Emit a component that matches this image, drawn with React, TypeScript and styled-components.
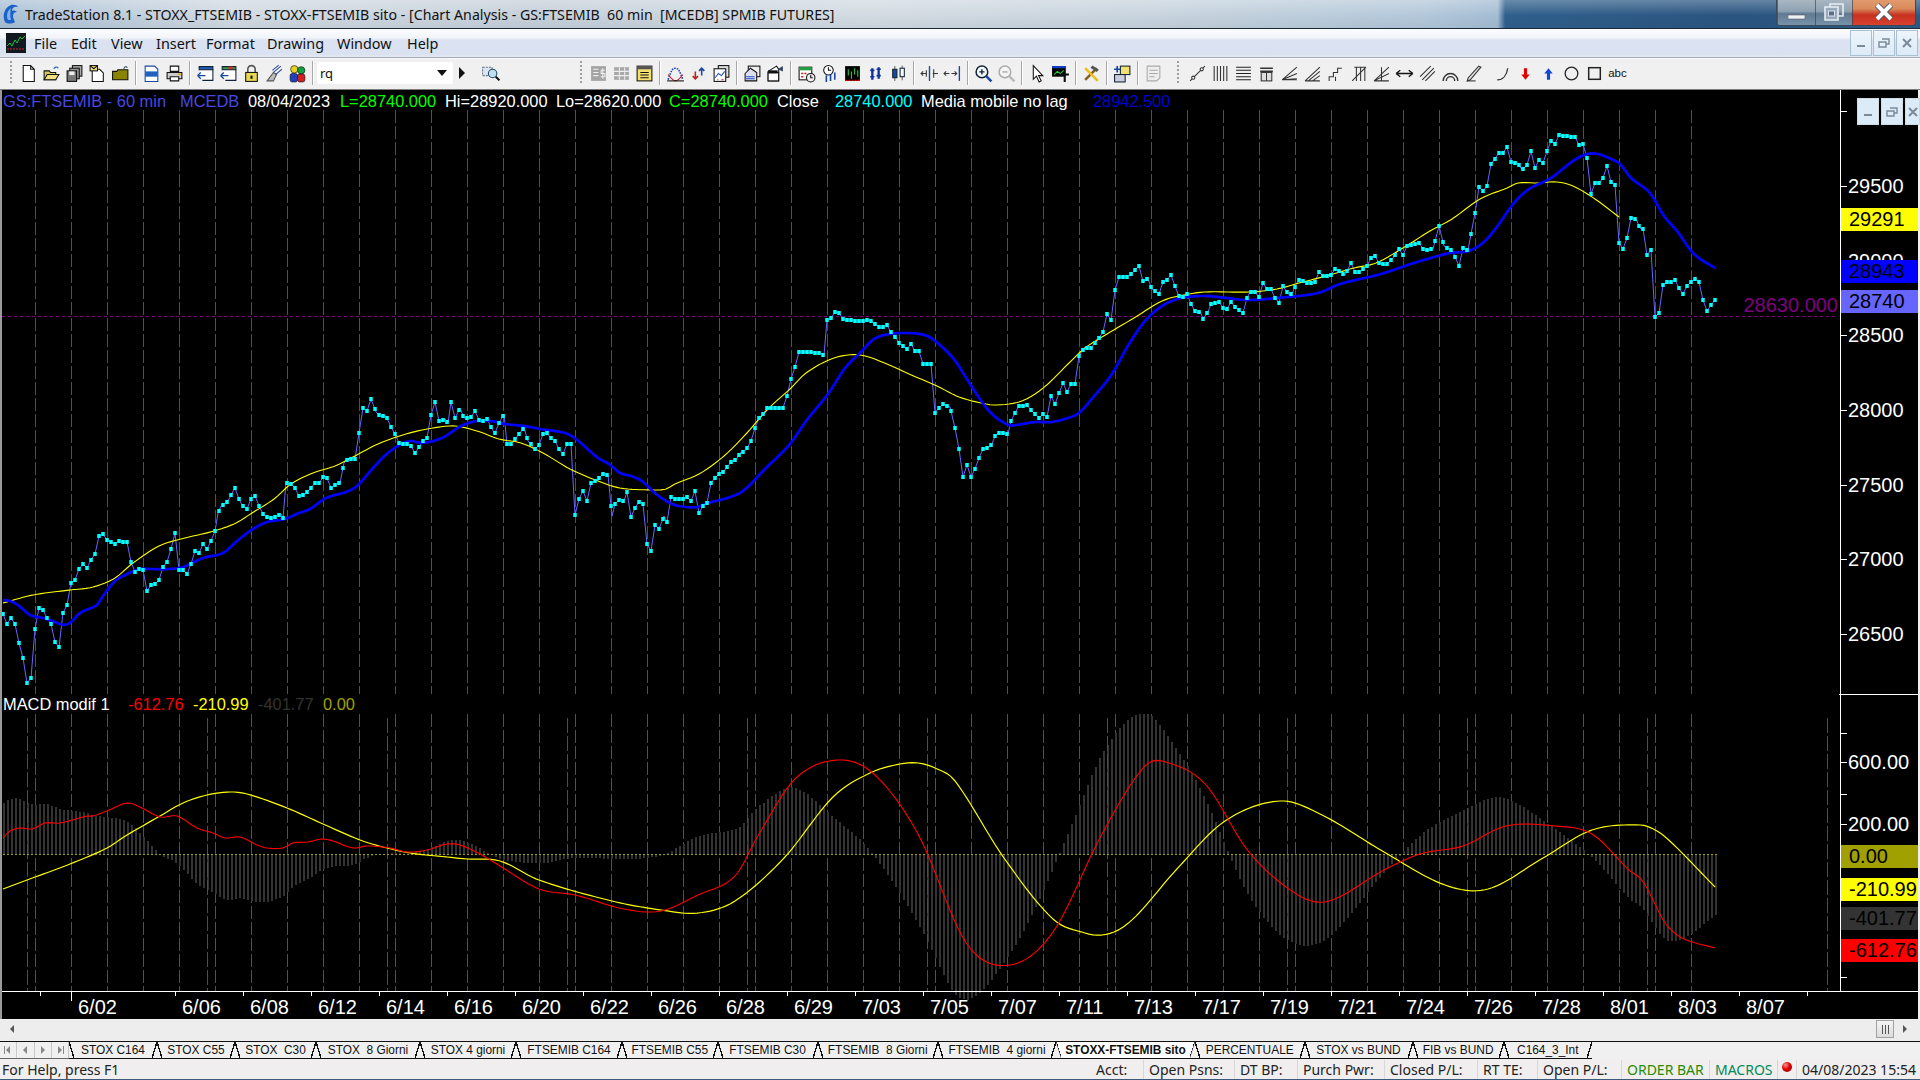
import React from "react";
import styled, { createGlobalStyle } from "styled-components";

const GlobalStyle = createGlobalStyle`
  html, body {
    margin: 0;
    padding: 0;
    background: #f0f0f0;
    overflow: hidden;
  }
  #root {
    height: 1080px;
  }
`;

const uiFont = `"Noto Sans", "Open Sans", sans-serif`;
const chartFont = `"Liberation Sans", Arial, sans-serif`;

const Root = styled.div`
  width: 1920px;
  height: 1080px;
  display: flex;
  flex-direction: column;
  overflow: hidden;
  font-family: ${uiFont};
`;

// Title bar
const TitleBarBox = styled.div`
  height: 28px;
  flex: none;
  display: flex;
  align-items: center;
  border-bottom: 1px solid #1c2a38;
  background:
    linear-gradient(180deg, rgba(255, 255, 255, 0.28), rgba(255, 255, 255, 0) 55%, rgba(30, 50, 70, 0.06)),
    linear-gradient(
      90deg,
      #a9c0d6 0,
      #d2dae2 12%,
      #c6d0da 28%,
      #d3dbe2 45%,
      #c8d4de 60%,
      #b4c8da 74%,
      #a4bdd3 78%,
      #2f5f8c 78.4%,
      #2a5580 90%,
      #2b5a86 100%
    );
`;
const TitleLogo = styled.svg`
  width: 17px;
  height: 22px;
  margin-left: 2px;
  flex: none;
`;
const TitleText = styled.div`
  margin-left: 6px;
  font-size: 14.2px;
  color: #111;
  white-space: pre;
`;
const WindowButtons = styled.div`
  margin-left: auto;
  margin-right: 4px;
  height: 25px;
  margin-top: -3px;
  display: flex;
  border: 1px solid #3a4a5a;
  border-top: none;
  border-radius: 0 0 4px 4px;
  overflow: hidden;
`;
const WinBtn = styled.div<{ $w: number; $close?: boolean }>`
  width: ${(p) => p.$w}px;
  display: flex;
  align-items: center;
  justify-content: center;
  border-left: 1px solid rgba(40, 60, 80, 0.6);
  background: ${(p) =>
    p.$close
      ? "linear-gradient(180deg, #e09a6c 0, #d98a5c 35%, #c83020 60%, #d84030 100%)"
      : "linear-gradient(180deg, #a9b6c2 0, #8fa2b2 45%, #5f7a92 55%, #7892a8 100%)"};
`;

// Menu bar
const MenuBarBox = styled.div`
  height: 28px;
  flex: none;
  display: flex;
  align-items: center;
  background: linear-gradient(180deg, #fbfcfe 0, #f2f5fa 30%, #dbe2f1 40%, #dae1f0 90%, #e6eaf4 100%);
  border-bottom: 1px solid #a8a8b0;
`;
const MenuLogo = styled.svg`
  width: 20px;
  height: 20px;
  margin-left: 6px;
  margin-right: 8px;
  flex: none;
`;
const MenuItem = styled.span<{ $w: number }>`
  width: ${(p) => p.$w}px;
  font-size: 14.4px;
  color: #111;
`;
const MdiButtons = styled.div`
  margin-left: auto;
  margin-right: 2px;
  display: flex;
  gap: 1px;
`;
const MdiBtn = styled.div<{ $w?: number }>`
  width: ${(p) => p.$w ?? 22}px;
  height: 26px;
  box-sizing: border-box;
  border: 1px solid #a8c0d0;
  background: linear-gradient(180deg, #eef5fb, #dcebf8);
  display: flex;
  align-items: center;
  justify-content: center;
`;

// Toolbar
const ToolbarBox = styled.div`
  height: 32px;
  flex: none;
  box-sizing: border-box;
  display: flex;
  align-items: center;
  padding-left: 10px;
  padding-bottom: 2px;
  background: #f0f0f0;
  border-top: 1px solid #fafafa;
  border-bottom: 1px solid #7c7c7c;
`;
const Grip = styled.div<{ $ml?: number }>`
  width: 2px;
  height: 24px;
  margin-left: ${(p) => p.$ml ?? 0}px;
  margin-right: 5px;
  flex: none;
  background: repeating-linear-gradient(180deg, #a0a0a0 0 2px, transparent 2px 4px);
`;
const ToolSlot = styled.div<{ $w?: number }>`
  width: ${(p) => p.$w ?? 23}px;
  height: 22px;
  flex: none;
  display: flex;
  align-items: center;
  justify-content: center;
`;
const ToolSep = styled.div`
  width: 8px;
  height: 24px;
  flex: none;
  background: linear-gradient(90deg, transparent 3px, #a8a8a8 3px, #a8a8a8 4px, #fff 4px, #fff 5px, transparent 5px);
`;
const ToolGap = styled.div<{ $w: number }>`
  width: ${(p) => p.$w}px;
  flex: none;
`;
const Combo = styled.div`
  width: 136px;
  height: 22px;
  flex: none;
  box-sizing: border-box;
  background: #fff;
  display: flex;
  align-items: center;
  justify-content: space-between;
  padding: 0 5px 0 3px;
  font-size: 13px;
  color: #111;
  border-radius: 2px;
`;
const AbcText = styled.span`
  font-size: 11.5px;
  color: #111;
  font-family: ${chartFont};
`;

// Chart
const ChartPane = styled.div`
  position: relative;
  height: 929px;
  flex: none;
  background: #000;
  border-left: 2px solid #9a9a9a;
  border-right: 2px solid #f0f0f0;
`;
const ChartSvg = styled.svg`
  display: block;
  width: 1916px;
  height: 929px;
`;
const Legend = styled.div<{ $top: number }>`
  position: absolute;
  left: 1px;
  top: ${(p) => p.$top}px;
  height: 22px;
  display: flex;
  align-items: center;
  font-family: ${chartFont};
  font-size: 16.4px;
  white-space: pre;
`;
const LegendItem = styled.span<{ $w?: number; $c: string }>`
  color: ${(p) => p.$c};
  ${(p) => (p.$w ? `width: ${p.$w}px;` : "")}
`;
const PaneButtons = styled.div`
  position: absolute;
  top: 8px;
  left: 1855px;
  display: flex;
  gap: 2px;
`;
const PaneBtn = styled(MdiBtn)`
  height: 27px;
  border-color: #d0d8e0;
  background: #dcebf8;
`;

// Scroll row
const ScrollRow = styled.div`
  height: 22px;
  flex: none;
  box-sizing: border-box;
  display: flex;
  align-items: center;
  background: #ededed;
  padding: 0 10px 2px 7px;
`;
const ScrollThumb = styled.div`
  margin-left: auto;
  margin-right: 6px;
  width: 18px;
  height: 18px;
  box-sizing: border-box;
  border: 1px solid #a0a0a0;
  background: linear-gradient(180deg, #f4f4f4, #dcdcdc);
  display: flex;
  align-items: center;
  justify-content: center;
  gap: 2px;
`;
const ThumbLine = styled.i`
  width: 1px;
  height: 9px;
  background: #555;
`;

// Sheet tabs
const TabsRow = styled.div`
  height: 18px;
  flex: none;
  display: flex;
  background: #f0f0f0;
  border-top: 1px solid #111;
  box-sizing: border-box;
`;
const TabNav = styled.div`
  width: 69px;
  flex: none;
  display: flex;
  border-bottom: 1px solid #666;
  box-sizing: border-box;
`;
const TabNavBtn = styled.div`
  flex: 1;
  display: flex;
  align-items: center;
  justify-content: center;
  border-right: 1px solid #c8c8c8;
`;
const TabStrip = styled.div`
  display: flex;
  border-bottom: 1px solid #111;
  box-sizing: border-box;
`;
const slash = (dir: string) =>
  `linear-gradient(to top ${dir}, transparent calc(50% - 0.7px), #111 calc(50% - 0.7px), #111 calc(50% + 0.7px), transparent calc(50% + 0.7px))`;
const Tab = styled.div<{ $w: number; $active?: boolean }>`
  width: ${(p) => p.$w}px;
  flex: none;
  display: flex;
  align-items: center;
  justify-content: center;
  font-family: ${chartFont};
  font-size: 11.9px;
  font-weight: ${(p) => (p.$active ? 700 : 400)};
  color: #111;
  white-space: pre;
  background-color: ${(p) => (p.$active ? "#fff" : "transparent")};
  background-image: ${slash("right")}, ${slash("left")};
  background-size: 5px 100%;
  background-position: left top, right top;
  background-repeat: no-repeat;
  ${(p) => (p.$active ? "clip-path: polygon(0 0, 100% 0, calc(100% - 5px) 100%, 5px 100%);" : "")}
`;

// Status bar
const StatusBarBox = styled.div`
  height: 20px;
  flex: none;
  box-sizing: border-box;
  padding-top: 1px;
  display: flex;
  align-items: center;
  background: #f0eeee;
  font-size: 14px;
  color: #222;
`;
const StatusHelp = styled.div`
  width: 1091px;
  padding-left: 2px;
  box-sizing: border-box;
`;
const StatusCell = styled.div<{ $w: number; $c?: string; $plain?: boolean }>`
  width: ${(p) => p.$w}px;
  height: 100%;
  flex: none;
  box-sizing: border-box;
  padding-left: 5px;
  white-space: nowrap;
  display: flex;
  align-items: center;
  color: ${(p) => p.$c ?? "#222"};
  ${(p) => (p.$plain ? "" : "border-left: 1px solid #d8d6d6;")}
`;
const RedDot = styled.div`
  width: 10px;
  height: 10px;
  margin-left: -1px;
  margin-top: -5px;
  border-radius: 50%;
  background: radial-gradient(circle at 35% 30%, #ff9090, #e00000 45%, #800000);
`;
const BottomEdge = styled.div`
  height: 2px;
  flex: none;
  background: #3c5a7c;
`;

// Series, as x y pairs in page pixels
type Pts = [number, number][];
const parse = (s: string) => {
  const n = s.trim().split(/\s+/).map(Number);
  const out: Pts = [];
  for (let i = 0; i < n.length; i += 2) out.push([n[i], n[i + 1]]);
  return out;
};

const price = parse(`3 613 7 623 11 617 15 623 19 642 23 657 27 682 31 677 35 628 39 607 43 609 47 617 51 623 55 641 59 646 63 612 67 604 71 582 75 579 79 568 83 563 87 567 91 559 95 553 99 535 103 533 107 539 111 541 115 543 119 540 123 541 127 541 131 561 135 571 139 568 143 569 147 590 151 584 155 583 159 579 163 566 167 561 171 548 175 532 179 569 183 569 187 573 191 563 195 550 199 552 203 543 207 548 211 540 215 530 218 512 221 505 228 500 235 487 239 498 242 504 247 508 251 498 255 495 260 507 263 513 269 517 274 516 281 513 283 517 286 482 291 483 295 487 299 495 305 493 311 487 315 482 319 482 324 475 327 477 331 487 336 483 340 482 344 462 348 458 355 458 359 432 363 407 367 410 371 398 376 411 380 415 386 415 391 426 396 435 399 442 407 443 411 445 415 452 420 445 423 440 427 437 431 414 435 401 439 420 445 418 448 422 451 401 455 417 460 407 464 417 471 416 475 410 480 421 487 418 492 428 495 432 499 422 504 413 507 443 511 443 516 437 519 433 524 427 528 440 535 448 539 444 543 433 547 432 551 437 555 440 559 448 563 453 567 443 571 443 575 514 579 498 583 490 587 500 591 482 595 480 599 477 603 473 608 474 612 515 615 503 620 498 624 500 627 491 631 516 635 507 640 499 643 503 647 543 651 550 655 524 659 528 664 515 667 521 671 496 675 498 683 498 687 496 691 500 695 490 699 512 703 505 707 502 711 482 715 477 720 472 723 471 728 465 732 460 736 459 740 452 746 449 751 440 755 427 759 417 763 413 767 407 776 407 783 407 787 395 791 378 795 366 799 351 804 351 820 352 824 354 827 319 831 317 835 311 839 312 843 318 851 319 858 320 863 320 870 319 875 323 881 327 887 324 892 333 896 337 900 343 907 348 911 343 915 350 919 350 923 363 931 363 935 412 939 407 943 403 950 406 955 427 959 448 963 476 967 464 971 476 975 468 979 457 983 448 988 447 992 443 995 435 1000 431 1004 432 1008 433 1011 420 1015 412 1019 405 1027 404 1031 409 1035 413 1039 417 1043 413 1047 416 1051 395 1055 403 1058 395 1063 382 1067 391 1071 383 1075 383 1079 355 1084 347 1091 347 1099 337 1103 331 1107 313 1111 319 1115 289 1119 276 1127 276 1132 272 1139 265 1143 280 1148 278 1152 288 1159 293 1163 281 1167 279 1171 274 1175 285 1180 298 1187 293 1191 303 1196 312 1200 310 1203 318 1208 311 1211 303 1219 301 1224 308 1227 308 1231 301 1236 307 1243 312 1247 297 1250 291 1255 291 1259 296 1263 282 1267 288 1271 288 1275 297 1279 302 1283 285 1288 293 1292 293 1296 283 1300 278 1304 281 1309 282 1315 281 1319 271 1323 275 1331 274 1335 268 1340 271 1345 274 1351 262 1356 273 1361 270 1367 265 1371 257 1375 255 1379 262 1386 264 1393 257 1399 248 1403 254 1407 245 1419 242 1424 249 1433 248 1439 225 1444 245 1448 247 1453 251 1459 265 1463 247 1468 249 1471 233 1475 212 1479 186 1483 190 1487 185 1491 163 1494 159 1499 152 1503 152 1507 146 1511 161 1518 162 1522 169 1527 164 1531 150 1535 167 1539 159 1543 162 1547 150 1551 140 1555 143 1559 134 1575 136 1579 144 1583 143 1587 157 1591 193 1595 182 1599 182 1603 177 1607 165 1611 181 1615 184 1619 242 1623 248 1627 237 1631 217 1636 218 1640 227 1643 228 1647 254 1651 249 1655 316 1659 312 1663 284 1667 281 1671 281 1675 279 1679 287 1683 293 1687 285 1691 281 1695 278 1699 281 1703 299 1707 310 1711 304 1715 299`);

const blueMa = parse(`3 599 10 600 18 604 30 614 43 617 55 621 63 624 70 622 80 612 97 604 103 595 115 580 125 574 140 568 150 568 170 568 183 566 203 557 223 552 237 540 253 528 267 521 285 518 299 512 310 508 326 497 346 491 357 485 373 467 389 451 409 440 422 442 442 437 461 425 477 420 491 420 505 423 524 425 540 428 565 432 576 438 598 457 609 463 620 472 631 475 642 480 656 493 672 503 686 506 697 506 708 502 727 497 743 490 765 468 790 443 806 420 828 393 845 367 860 352 874 338 890 333 907 332 920 333 931 337 953 357 970 383 989 410 1008 424 1016 424 1035 421 1052 421 1071 416 1079 412 1096 393 1112 373 1129 343 1145 320 1162 305 1181 297 1205 295 1227 297 1247 299 1277 297 1318 292 1340 283 1381 273 1414 262 1450 252 1469 250 1485 240 1499 223 1513 203 1529 188 1551 177 1573 160 1587 153 1598 153 1609 157 1620 163 1631 177 1650 192 1664 215 1677 230 1694 253 1715 267`);

const yellowMa = parse(`3 602 33 594 70 589 93 586 115 577 133 562 159 545 181 538 214 530 236 522 252 512 274 498 291 483 313 472 335 465 351 457 378 443 406 433 433 427 455 425 477 430 499 438 521 442 543 452 570 468 598 480 620 487 653 489 666 488 675 483 699 473 724 455 746 433 768 408 790 388 806 372 834 357 860 354 887 363 909 373 937 385 959 396 986 403 997 404 1019 401 1035 393 1049 382 1068 363 1085 347 1107 333 1134 317 1162 300 1184 294 1205 291 1249 291 1277 288 1299 282 1326 275 1354 267 1376 262 1403 247 1430 230 1452 218 1480 198 1507 187 1518 182 1537 182 1557 181 1573 185 1595 198 1619 216`);

const macdPts = parse(`3 837 10 830 20 827 32 828 45 822 60 822 87 815 93 815 107 810 127 802 140 806 160 816 177 815 197 827 213 832 225 837 240 836 257 844 267 847 283 847 293 842 308 841 322 838 333 840 353 847 367 845 390 847 407 851 427 849 447 843 460 844 480 853 500 865 539 888 575 894 624 908 661 910 698 894 735 875 759 833 796 777 839 759 875 774 918 833 967 943 1010 964 1053 931 1102 833 1145 765 1169 762 1206 784 1249 851 1298 894 1329 900 1384 869 1420 853 1463 845 1506 825 1555 825 1592 833 1629 869 1640 877 1647 887 1657 907 1665 922 1682 937 1715 947`);

const signalPts = parse(`3 888 27 879 70 863 107 847 127 834 160 815 183 802 207 794 230 791 247 793 287 807 323 823 360 839 383 846 410 852 447 856 467 858 500 860 539 879 612 900 661 909 698 912 735 900 784 857 833 796 870 772 900 763 918 762 935 767 955 780 1004 857 1053 918 1085 932 1102 934 1120 928 1139 912 1176 869 1225 820 1280 800 1322 814 1384 851 1445 884 1488 888 1543 857 1592 829 1640 824 1657 830 1673 843 1715 886`);

const interp = (pts: Pts, x: number) => {
  for (let i = 1; i < pts.length; i++) {
    if (x <= pts[i][0]) {
      const [x0, y0] = pts[i - 1];
      const [x1, y1] = pts[i];
      return y0 + ((y1 - y0) * (x - x0)) / (x1 - x0);
    }
  }
  return pts[pts.length - 1][1];
};

// Hermite resampling so the averages read as curves, not as straight pieces
const smooth = (pts: Pts, step = 4) => {
  const slope = (i: number) => {
    const a = pts[Math.max(i - 1, 0)];
    const b = pts[Math.min(i + 1, pts.length - 1)];
    return (b[1] - a[1]) / (b[0] - a[0]);
  };
  const out: Pts = [];
  for (let i = 0; i < pts.length - 1; i++) {
    const [x0, y0] = pts[i];
    const [x1, y1] = pts[i + 1];
    const h = x1 - x0;
    const m0 = slope(i);
    const m1 = slope(i + 1);
    for (let x = x0; x < x1; x += step) {
      const t = (x - x0) / h;
      const t2 = t * t;
      const t3 = t2 * t;
      const y = (2 * t3 - 3 * t2 + 1) * y0 + (t3 - 2 * t2 + t) * h * m0 + (-2 * t3 + 3 * t2) * y1 + (t3 - t2) * h * m1;
      out.push([x, +y.toFixed(2)]);
    }
  }
  out.push(pts[pts.length - 1]);
  return out;
};

const blueCurve = smooth(blueMa);
const yellowCurve = smooth(yellowMa);
const macd = smooth(macdPts);
const signal = smooth(signalPts);

const toPoints = (pts: Pts) => pts.map((p) => p.join(",")).join(" ");

const bars: number[] = [];
for (let x = 3; x <= 1715; x += 4) bars.push(x);
const gridX: number[] = [];
for (let x = 35; x <= 1691; x += 36) gridX.push(x);
const sessionX: number[] = [];
for (let x = 27; x <= 1827; x += 180) sessionX.push(x);

const priceTicks = [110, 185, 260, 334, 409, 484, 558, 633];
const priceLabels: [string, number][] = [
  ["29500", 185],
  ["29000", 260],
  ["28500", 334],
  ["28000", 409],
  ["27500", 484],
  ["27000", 558],
  ["26500", 633],
];
const macdTicks = [732, 761, 793, 823, 976];
const macdLabels: [string, number][] = [
  ["600.00", 761],
  ["200.00", 823],
];
const tags: [string, number, string, string][] = [
  ["29291", 207, "#ffff00", "#000"],
  ["28943", 259, "#0000ff", "#000"],
  ["28740", 289, "#6666ff", "#000"],
  ["0.00", 844, "#a0a000", "#000"],
  ["-210.99", 877, "#ffff00", "#000"],
  ["-401.77", 906, "#333333", "#000"],
  ["-612.76", 938, "#ff0000", "#000"],
];
const dates = ["6/06", "6/08", "6/12", "6/14", "6/16", "6/20", "6/22", "6/26", "6/28", "6/29", "7/03", "7/05", "7/07", "7/11", "7/13", "7/17", "7/19", "7/21", "7/24", "7/26", "7/28", "8/01", "8/03", "8/07"];

function Chart() {
  return (
    <ChartSvg viewBox="2 89 1916 929" fontFamily={chartFont}>
      <g stroke="#505050" strokeDasharray="13 3" shapeRendering="crispEdges">
        {gridX.map((x) => (
          <g key={x}>
            <line x1={x + 0.5} x2={x + 0.5} y1={109} y2={693} />
            <line x1={x + 0.5} x2={x + 0.5} y1={713} y2={990} />
          </g>
        ))}
      </g>
      <line x1={2} x2={1836} y1={315.5} y2={315.5} stroke="#800080" strokeDasharray="3 3" shapeRendering="crispEdges" />
      <polyline points={toPoints(price)} fill="none" stroke="#6666ff" strokeWidth={1} />
      <polyline points={toPoints(yellowCurve)} fill="none" stroke="#ffff00" strokeWidth={1.1} />
      <polyline points={toPoints(blueCurve)} fill="none" stroke="#0000ff" strokeWidth={2.7} />
      <g fill="#00ffff">
        {bars.map((x) => (
          <rect key={x} x={x - 1.75} y={Math.round(interp(price, x)) - 2} width={3.5} height={4} />
        ))}
      </g>
      <g fill="#333333" shapeRendering="crispEdges">
        {bars.map((x) => {
          const h = interp(signal, x) - interp(macd, x);
          const top = h > 0 ? Math.max(853 - h, 713) : 853;
          const bottom = h > 0 ? 853 : 853 - h;
          return <rect key={x} x={x} y={top} width={2} height={bottom - top} />;
        })}
      </g>
      <g stroke="#0a6a6c" strokeDasharray="15 3" shapeRendering="crispEdges">
        {sessionX.map((x) => (
          <line key={x} x1={x + 0.5} x2={x + 0.5} y1={717} y2={990} />
        ))}
      </g>
      <line x1={3} x2={1717} y1={853.5} y2={853.5} stroke="#a0a000" strokeDasharray="2 2" shapeRendering="crispEdges" />
      <polyline points={toPoints(signal)} fill="none" stroke="#ffff00" strokeWidth={1.2} />
      <polyline points={toPoints(macd)} fill="none" stroke="#ff0000" strokeWidth={1.1} />

      <text x={1838} y={311} fill="#800080" fontSize={20} textAnchor="end">
        28630.000
      </text>

      <g stroke="#fff" shapeRendering="crispEdges">
        <line x1={1840.5} x2={1840.5} y1={89} y2={990} />
        <line x1={2} x2={1918} y1={990.5} y2={990.5} />
        <line x1={1839} x2={1918} y1={693.5} y2={693.5} />
        {[...priceTicks, ...macdTicks].map((y) => (
          <line key={y} x1={1840} x2={1847} y1={y + 0.5} y2={y + 0.5} />
        ))}
        <line x1={40.5} x2={40.5} y1={990} y2={995} />
        <line x1={71.5} x2={71.5} y1={990} y2={1000} />
        {[...dates, ""].map((_, i) => (
          <line key={i} x1={175.5 + 68 * i} x2={175.5 + 68 * i} y1={990} y2={995} />
        ))}
      </g>
      <g fill="#fff" fontSize={20}>
        {[...priceLabels, ...macdLabels].map(([t, y]) => (
          <text key={t} x={1848} y={y + 7}>
            {t}
          </text>
        ))}
      </g>
      {tags.map(([t, y, bg, fg]) => (
        <g key={t}>
          <rect x={1841} y={y} width={77} height={23} fill={bg} />
          <text x={1849} y={y + 18} fill={fg} fontSize={20}>
            {t}
          </text>
        </g>
      ))}
      <g fill="#fff" fontSize={20}>
        <text x={78} y={1013}>6/02</text>
        {dates.map((d, i) => (
          <text key={d} x={182 + 68 * i} y={1013}>
            {d}
          </text>
        ))}
      </g>
    </ChartSvg>
  );
}

// Toolbar glyphs, drawn on an 18 x 18 grid
const k = "#111";
const glyphs: Record<string, React.ReactNode> = {
  doc: <path d="M4 1.5h7l3.5 3.5v11.5H4zM11 1.5V5h3.5" fill="#fff" stroke={k} />,
  open: (
    <>
      <path d="M2 6.5h5l1 1.5h5v7H2z" fill="#d8c860" stroke={k} />
      <path d="M2 15l3-5h11l-3 5z" fill="#f0e080" stroke={k} />
      <path d="M11 4.5c1.5-2 3-2 4.5-.5" fill="none" stroke="#1060c0" />
    </>
  ),
  disks: (
    <>
      <rect x="7" y="1.5" width="9" height="10" fill="#aaa" stroke={k} />
      <rect x="4.5" y="4" width="9" height="10" fill="#999" stroke={k} />
      <rect x="2" y="6.5" width="9" height="10" fill="#777" stroke={k} />
      <rect x="4" y="7" width="5" height="3.5" fill="#eee" />
    </>
  ),
  note: (
    <>
      <path d="M4 5h7l3.5 3.5v8H4z" fill="#fff" stroke={k} />
      <rect x="2" y="1.5" width="7" height="5" fill="#f0e080" stroke={k} />
      <path d="M2 1.5l3.5 3 3.5-3" fill="none" stroke={k} />
    </>
  ),
  oliveFolder: (
    <>
      <path d="M1.5 7h4l1-1.5H16V15H1.5z" fill="#8a8400" stroke={k} />
      <path d="M12 4.5c1-2 2.5-2.5 3.5-1" fill="none" stroke="#246" />
    </>
  ),
  preview: (
    <>
      <path d="M3 2h9l3 3v11.5H3z" fill="#fff" stroke="#1848a0" />
      <rect x="3" y="7" width="12" height="5" fill="#2060c0" />
    </>
  ),
  printer: (
    <>
      <path d="M5 2h8v5H5z" fill="#fff" stroke={k} />
      <path d="M2 8h14v6H2z" fill="#ccc" stroke={k} />
      <path d="M5 12h8v4H5z" fill="#fff" stroke={k} />
      <rect x="12" y="9" width="3" height="1.5" fill="#d8b030" />
    </>
  ),
  winBack: (
    <>
      <path d="M3 2.5h13v3H3z" fill="#2060c0" stroke="#123" />
      <path d="M3 5.5h13v10H6" fill="#fff" stroke="#123" />
      <path d="M1.5 11H9M1.5 11l3-3M1.5 11l3 3" fill="none" stroke="#1848a0" strokeWidth="1.3" />
    </>
  ),
  winBack2: (
    <>
      <path d="M3 2.5h13v3H3z" fill="#30a040" stroke="#123" />
      <rect x="9" y="2.5" width="4" height="3" fill="#d03030" />
      <path d="M3 5.5h13v10H6" fill="#fff" stroke="#123" />
      <path d="M1.5 11H9M1.5 11l3-3M1.5 11l3 3" fill="none" stroke="#1848a0" strokeWidth="1.3" />
    </>
  ),
  lock: (
    <>
      <path d="M5.5 8V5a3.5 3.5 0 017 0v3" fill="none" stroke="#555" strokeWidth="1.5" />
      <rect x="3.5" y="8" width="11" height="8.5" fill="#e8d850" stroke={k} />
      <rect x="8" y="11" width="2" height="3" fill={k} />
    </>
  ),
  wand: (
    <>
      <path d="M2 16l6-8 3 2-3 6z" fill="#bbb" stroke="#555" />
      <path d="M8 8l7-6M10 10l6-5M7 6l6-5" stroke="#3050a0" fill="none" />
    </>
  ),
  cubes: (
    <>
      <circle cx="6" cy="5" r="3.5" fill="#e8d020" stroke={k} strokeWidth="0.6" />
      <circle cx="12.500" cy="6" r="3.500" fill="#10a040" stroke={k} strokeWidth="0.6" />
      <rect x="2" y="9" width="7" height="8" rx="2" fill="#2040c0" stroke={k} strokeWidth="0.6" />
      <rect x="9" y="9.500" width="7" height="7.500" rx="2" fill="#d02020" stroke={k} strokeWidth="0.6" />
    </>
  ),
  search: (
    <>
      <path d="M1.5 3h9v8h-9z" fill="#dde4f0" stroke="#678" strokeDasharray="2 1" />
      <circle cx="11" cy="9" r="4" fill="#bfe0f0" stroke="#246" />
      <path d="M14 12l3.5 3.5" stroke={k} strokeWidth="2" />
    </>
  ),
  gMoney: (
    <>
      <rect x="2" y="2" width="14" height="14" fill="#a4a4a4" />
      <path d="M4 5h5M4 8h5M4 11h5" stroke="#eee" />
      <path d="M15 6h-3.500v3h3.500v3H11M13 4v10" fill="none" stroke="#eee" />
    </>
  ),
  gTable: (
    <>
      <rect x="2" y="3" width="14" height="12" fill="#a8a8a8" />
      <path d="M2 7h14M2 11h14M7 3v12M12 3v12" stroke="#eee" />
    </>
  ),
  table: (
    <>
      <rect x="2" y="2" width="14" height="14" fill="#f4e070" stroke={k} />
      <rect x="2" y="2" width="14" height="3" fill="#555" />
      <path d="M5 8h8M5 10.5h8M5 13h8" stroke={k} />
    </>
  ),
  wave: (
    <>
      <path d="M2 15c3-9 4-11 7-11s4 3 7 11" fill="none" stroke="#2040c0" strokeDasharray="1.5 1" strokeWidth="1.5" />
      <path d="M2 10c3 4 5 6 7 6s4-2 7-6" fill="none" stroke="#c02020" />
      <path d="M1 16h16" stroke={k} />
    </>
  ),
  upDown: (
    <>
      <rect x="1.5" y="2" width="15" height="14" fill="#eee" />
      <path d="M6 7v7M3.5 11.5L6 14l2.5-2.5" fill="none" stroke="#c02020" strokeWidth="1.5" />
      <path d="M12 11V4M9.5 6.5L12 4l2.5 2.5" fill="none" stroke="#1848a0" strokeWidth="1.5" />
    </>
  ),
  cards: (
    <>
      <rect x="6" y="1.5" width="10" height="11" fill="#ddd" stroke={k} />
      <rect x="2" y="4.5" width="11" height="12" fill="#fff" stroke={k} />
      <path d="M3 13l3-4 3 2 3-4" fill="none" stroke="#2050c0" />
      <path d="M5 15h1M9 15h2" stroke="#c02020" />
    </>
  ),
  plotA: (
    <>
      <rect x="5" y="2" width="11" height="10" fill="#eee" stroke={k} />
      <path d="M2 9l5-5 6 4v8H2z" fill="#dde" stroke={k} />
      <path d="M3 14h8M3 12h8" stroke="#2050c0" />
    </>
  ),
  plotB: (
    <>
      <path d="M2 7l8-5 2 3v11H2z" fill="#fff" stroke={k} />
      <rect x="2" y="8" width="10" height="8" fill="#fff" stroke={k} />
      <rect x="2" y="6" width="9" height="3" fill="#111" />
      <path d="M11 5l5-3v5z" fill="#346" />
    </>
  ),
  calendar: (
    <>
      <rect x="2" y="3" width="12" height="12" fill="#fff" stroke={k} />
      <rect x="2" y="3" width="12" height="3" fill="#20a040" />
      <path d="M4 9h2M7 9h2M4 12h2" stroke="#c02020" strokeWidth="1.5" />
      <circle cx="13" cy="13" r="4" fill="#eee" stroke={k} />
      <path d="M13 10.5V13h2" fill="none" stroke={k} />
    </>
  ),
  clockBars: (
    <>
      <circle cx="8" cy="6" r="4.5" fill="#fff" stroke={k} />
      <path d="M8 3v3h2.5" fill="none" stroke={k} />
      <path d="M6 11v6M10 10v6M14 8v7" stroke="#1848a0" strokeWidth="1.5" />
    </>
  ),
  blackChart: (
    <>
      <rect x="2" y="2" width="14" height="14" fill="#000" />
      <path d="M5 5v6M8 7v7M11 4v6M14 6v6" stroke="#20d040" />
      <path d="M2 15.5h14" stroke="#e00000" strokeDasharray="2 1" />
    </>
  ),
  arrowsBars: (
    <>
      <path d="M6 4v11M12 3v11" stroke="#1030a0" strokeWidth="2.2" fill="none" />
      <path d="M4 6h4M10 11h4M4 12h4M10 5h4" stroke="#1030a0" strokeWidth="1.5" />
    </>
  ),
  candles: (
    <>
      <path d="M5.5 2v14M12.5 1.5v14" stroke="#666" />
      <rect x="3.5" y="5" width="4" height="8" fill="#1848a0" stroke="#123" />
      <rect x="10.5" y="4" width="4" height="8" fill="#fff" stroke="#123" />
    </>
  ),
  barsIn: (
    <>
      <path d="M9 2v14" stroke="#1848a0" strokeWidth="1.3" />
      <path d="M1 9h5M12 9h5M3 7l-2 2 2 2" fill="none" stroke="#333" />
      <path d="M6 6v6M13 5v8" stroke="#333" />
    </>
  ),
  barsOut: (
    <>
      <path d="M15.5 2v14" stroke="#1848a0" strokeWidth="1.3" />
      <path d="M1 9h5M8 9h5M3 7l-2 2 2 2M11 7l2 2-2 2" fill="none" stroke="#333" />
    </>
  ),
  zoomIn: (
    <>
      <circle cx="7.5" cy="7.5" r="5.5" fill="#f4fbff" stroke="#123" strokeWidth="1.4" />
      <path d="M5 7.5h5M7.5 5v5" stroke="#123" strokeWidth="1.3" />
      <path d="M11.5 11.5l5 5" stroke="#1848a0" strokeWidth="2.4" />
    </>
  ),
  zoomOut: (
    <>
      <circle cx="7.5" cy="7.5" r="5.5" fill="#f4f4f4" stroke="#aaa" strokeWidth="1.4" />
      <path d="M5 7.5h5" stroke="#aaa" strokeWidth="1.3" />
      <path d="M11.5 11.5l5 5" stroke="#bbb" strokeWidth="2.4" />
    </>
  ),
  pointer: <path d="M5 1.5v13l3-3 2.5 5.5 2-1-2.5-5H14z" fill="#fff" stroke={k} />,
  textChart: (
    <>
      <rect x="1" y="2" width="13" height="10" fill="#000" />
      <rect x="1" y="2" width="13" height="2" fill="#1040d0" />
      <path d="M3 10l3-3 3 2 3-3" fill="none" stroke="#20d040" />
      <path d="M9 10h8M13 10v7" stroke="#111" strokeWidth="2" />
    </>
  ),
  tools: (
    <>
      <path d="M3 15L14 4" stroke="#806020" strokeWidth="2.4" />
      <path d="M3 4l12 12" stroke="#e8c020" strokeWidth="2.4" />
      <path d="M10 1.5l6 4-2 2-6-4z" fill="#555" />
    </>
  ),
  boxes: (
    <>
      <rect x="7" y="2" width="9" height="8" fill="#f4e070" stroke="#123" />
      <rect x="1.5" y="10" width="10" height="7" fill="#ccd" stroke="#123" />
      <path d="M4 2v6M1 5h6" stroke="#1848a0" strokeWidth="1.6" />
    </>
  ),
  gNote: (
    <>
      <path d="M3 2h12v11l-3 3H3z" fill="#eee" stroke="#aaa" />
      <path d="M5 6h8M5 9h8M5 12h5" stroke="#aaa" />
    </>
  ),
  trend: (
    <>
      <path d="M2 16L16 2" stroke="#333" />
      <circle cx="5" cy="13" r="1.5" fill="#fff" stroke="#333" />
      <circle cx="13" cy="5" r="1.5" fill="#fff" stroke="#333" />
    </>
  ),
  vlines: <path d="M3 2v14M6 2v14M9 2v14M12 2v14M15 2v14" stroke="#333" />,
  hlines: <path d="M2 3h14M2 6h14M2 9h14M2 12h14M2 15h14" stroke="#222" />,
  fibHouse: (
    <>
      <path d="M3 4h12M3 7h12" stroke="#333" strokeWidth="1.5" />
      <rect x="4" y="8" width="10" height="8" fill="#ddd" stroke="#333" />
      <path d="M9 8v8" stroke="#333" />
    </>
  ),
  fan: <path d="M2 15L16 3M2 15l14-6M2 15l14-1M2 15h14" stroke="#333" fill="none" />,
  fan2: <path d="M2 16L16 3M5 16L16 7M9 16l7-5M2 16h14" stroke="#333" fill="none" />,
  steps: <path d="M3 16V12h4V8h4V4h4M9 16V12" stroke="#333" fill="none" />,
  gann: <path d="M5 3h11M3 16L16 3M7 3v13M11 3v13M15 3v13" stroke="#333" fill="none" />,
  pitch: <path d="M2 16L16 9M2 16L16 3M2 16h14M9 3v13" stroke="#333" fill="none" />,
  arrowH: <path d="M1 9h16M1 9l4-3M1 9l4 3M17 9l-4-3M17 9l-4 3" stroke="#111" strokeWidth="1.2" fill="none" />,
  channel: <path d="M2 12L12 2M4 15L15 4M7 16L16 7" stroke="#333" fill="none" />,
  arcs: <path d="M2 16a7 7 0 0114 0M5 16a4 4 0 018 0" stroke="#333" fill="none" strokeWidth="1.3" />,
  pen: (
    <>
      <path d="M3 16l3-1 10-12-2-1L4 13z" fill="#ddd" stroke="#333" />
      <path d="M3 16h8" stroke="#333" />
    </>
  ),
  curve: <path d="M4 15c5 0 9-4 10-11" stroke="#333" fill="none" strokeWidth="1.3" />,
  down: <path d="M7.500 4h3v6h2.500L9 15l-4-5h2.500z" fill="#e00000" />,
  up: <path d="M7.500 15h3V9h2.500L9 4 5 9h2.500z" fill="#1048d0" />,
  ellipse: <circle cx="9" cy="9" r="6" fill="none" stroke="#222" strokeWidth="1.2" />,
  square: <rect x="3.500" y="3.500" width="11" height="11" fill="none" stroke="#222" strokeWidth="1.4" />,
};

function Glyph({ name }: { name: string }) {
  return (
    <svg width="19" height="19" viewBox="0 0 18 18">
      {glyphs[name]}
    </svg>
  );
}

function Tools({ names, w }: { names: string[]; w?: number }) {
  return (
    <>
      {names.map((name, i) => (
        <ToolSlot key={name + i} $w={w}>
          <Glyph name={name} />
        </ToolSlot>
      ))}
    </>
  );
}

function Toolbar() {
  return (
    <ToolbarBox>
      <Grip />
      <Tools names={["doc", "open", "disks", "note", "oliveFolder"]} />
      <ToolSep />
      <Tools names={["preview", "printer"]} />
      <ToolSep />
      <Tools names={["winBack", "winBack2", "lock", "wand", "cubes"]} />
      <ToolSep />
      <Combo>
        rq
        <svg width="12" height="7" viewBox="0 0 12 7">
          <path d="M1 0h10L6 6z" fill="#111" />
        </svg>
      </Combo>
      <ToolSlot $w={19}>
        <svg width="7" height="12" viewBox="0 0 7 12">
          <path d="M0 0l6 6-6 6z" fill="#111" />
        </svg>
      </ToolSlot>
      <ToolGap $w={6} />
      <Tools names={["search"]} w={24} />
      <Grip $ml={78} />
      <Tools names={["gMoney", "gTable", "table"]} />
      <ToolSep />
      <Tools names={["wave", "upDown", "cards"]} />
      <ToolSep />
      <Tools names={["plotA", "plotB"]} />
      <ToolSep />
      <Tools names={["calendar", "clockBars", "blackChart", "arrowsBars", "candles"]} />
      <ToolSep />
      <Tools names={["barsIn", "barsOut"]} />
      <ToolSep />
      <Tools names={["zoomIn", "zoomOut"]} />
      <ToolSep />
      <Tools names={["pointer", "textChart"]} />
      <ToolSep />
      <Tools names={["tools"]} />
      <ToolSep />
      <Tools names={["boxes"]} />
      <ToolSep />
      <Tools names={["gNote"]} />
      <Grip $ml={12} />
      <ToolGap $w={2} />
      <Tools names={["trend", "vlines", "hlines", "fibHouse", "fan", "fan2", "steps", "gann", "pitch", "arrowH", "channel", "arcs", "pen"]} />
      <ToolGap $w={6} />
      <Tools names={["curve", "down", "up", "ellipse", "square"]} />
      <ToolSlot>
        <AbcText>abc</AbcText>
      </ToolSlot>
    </ToolbarBox>
  );
}

const menuItems: [string, number][] = [
  ["File", 37],
  ["Edit", 40],
  ["View", 45],
  ["Insert", 50],
  ["Format", 61],
  ["Drawing", 70],
  ["Window", 70],
  ["Help", 40],
];

const tabItems: [string, number][] = [
  ["STOX C164", 88],
  ["STOX C55", 78],
  ["STOX  C30", 81],
  ["STOX  8 Giorni", 104],
  ["STOX 4 giorni", 96],
  ["FTSEMIB C164", 106],
  ["FTSEMIB C55", 95.5],
  ["FTSEMIB C30", 100],
  ["FTSEMIB  8 Giorni", 120.5],
  ["FTSEMIB  4 giorni", 118],
  ["STOXX-FTSEMIB sito", 139],
  ["PERCENTUALE", 109.5],
  ["STOX vs BUND", 108],
  ["FIB vs BUND", 91.3],
  ["C164_3_Int", 88],
];

const statusCells: [string, number, string?][] = [
  ["Open Psns:", 91],
  ["DT BP:", 63],
  ["Purch Pwr:", 87],
  ["Closed P/L:", 93],
  ["RT TE:", 60],
  ["Open P/L:", 84],
  ["ORDER BAR", 88, "#2a8a00"],
  ["MACROS", 68, "#008a5a"],
];

const MinIcon = () => (
  <svg width="12" height="12" viewBox="0 0 12 12">
    <rect x="2" y="8" width="8" height="2" fill="#7a8a98" />
  </svg>
);
const RestoreIcon = () => (
  <svg width="12" height="12" viewBox="0 0 12 12">
    <path d="M4 2h7v5H8M1 5h7v5H1z" fill="none" stroke="#7a8a98" strokeWidth="1.4" />
  </svg>
);
const CloseIcon = () => (
  <svg width="12" height="12" viewBox="0 0 12 12">
    <path d="M2 2l8 8M10 2l-8 8" stroke="#7a8a98" strokeWidth="2" />
  </svg>
);
const Arrow = ({ left, bar, fill = "#888" }: { left?: boolean; bar?: boolean; fill?: string }) => (
  <svg width="10" height="10" viewBox="0 0 10 10">
    <path d={left ? "M7 1v8L3 5z" : "M3 1v8l4-4z"} fill={fill} />
    {bar && <path d={left ? "M1.500 1v8" : "M8.500 1v8"} stroke={fill} />}
  </svg>
);

export default function App() {
  return (
    <Root>
      <GlobalStyle />
      <TitleBarBox>
        <TitleLogo viewBox="0 0 17 22">
          <path d="M3 19C0 13 2 5 9 2c4-1 7 1 7 2-4-1-6 1-6 4 2-1 4 0 5 1-3 0-4 2-4 4s1 4 2 6c-3 2-8 2-10 0z" fill="#1c62c8" />
          <path d="M6 17c-2-4-1-9 3-12-1 4-1 8 0 12z" fill="#7cb4f0" />
        </TitleLogo>
        <TitleText>TradeStation 8.1 - STOXX_FTSEMIB - STOXX-FTSEMIB sito - [Chart Analysis - GS:FTSEMIB  60 min  [MCEDB] SPMIB FUTURES]</TitleText>
        <WindowButtons>
          <WinBtn $w={37}>
            <svg width="18" height="20" viewBox="0 0 18 20">
              <rect x="0" y="13" width="17" height="4" fill="#eef2f5" stroke="#556" strokeWidth="0.6" />
            </svg>
          </WinBtn>
          <WinBtn $w={36}>
            <svg width="20" height="20" viewBox="0 0 20 20">
              <path d="M6 2h13v12H6z" fill="none" stroke="#e8eef2" strokeWidth="1.6" />
              <path d="M1 5h13v13H1z" fill="#98aaba" stroke="#e8eef2" strokeWidth="1.6" />
              <rect x="4.500" y="9" width="6" height="5" fill="#587088" stroke="#dde" />
            </svg>
          </WinBtn>
          <WinBtn $w={62} $close>
            <svg width="20" height="18" viewBox="0 0 20 18">
              <path d="M3 2l14 14M17 2L3 16" stroke="#556" strokeWidth="6" />
              <path d="M3 2l14 14M17 2L3 16" stroke="#fff" strokeWidth="4" />
            </svg>
          </WinBtn>
        </WindowButtons>
      </TitleBarBox>

      <MenuBarBox>
        <MenuLogo viewBox="0 0 20 20">
          <rect width="20" height="20" fill="#101820" />
          <path d="M1 13l3-3 2 3 3-6 2 3 3-6 2 2 3-3" fill="none" stroke="#20c040" />
          <path d="M1 16h18" stroke="#d02020" strokeDasharray="2 1" />
        </MenuLogo>
        {menuItems.map(([label, w]) => (
          <MenuItem key={label} $w={w}>
            {label}
          </MenuItem>
        ))}
        <MdiButtons>
          <MdiBtn>
            <MinIcon />
          </MdiBtn>
          <MdiBtn>
            <RestoreIcon />
          </MdiBtn>
          <MdiBtn>
            <CloseIcon />
          </MdiBtn>
        </MdiButtons>
      </MenuBarBox>

      <Toolbar />

      <ChartPane>
        <Chart />
        <Legend $top={0}>
          <LegendItem $w={177} $c="#4848e0">GS:FTSEMIB - 60 min</LegendItem>
          <LegendItem $w={68} $c="#4848e0">MCEDB</LegendItem>
          <LegendItem $w={92} $c="#fff">08/04/2023</LegendItem>
          <LegendItem $w={105} $c="#00ff00">L=28740.000</LegendItem>
          <LegendItem $w={111} $c="#fff">Hi=28920.000</LegendItem>
          <LegendItem $w={113} $c="#fff">Lo=28620.000</LegendItem>
          <LegendItem $w={108} $c="#00ff00">C=28740.000</LegendItem>
          <LegendItem $w={58} $c="#fff">Close</LegendItem>
          <LegendItem $w={86} $c="#00ffff">28740.000</LegendItem>
          <LegendItem $w={172} $c="#fff">Media mobile no lag</LegendItem>
          <LegendItem $c="#0000d0">28942.500</LegendItem>
        </Legend>
        <Legend $top={603}>
          <LegendItem $w={125} $c="#fff">MACD modif 1</LegendItem>
          <LegendItem $w={65} $c="#ff0000">-612.76</LegendItem>
          <LegendItem $w={65} $c="#ffff00">-210.99</LegendItem>
          <LegendItem $w={65} $c="#333333">-401.77</LegendItem>
          <LegendItem $c="#a0a000">0.00</LegendItem>
        </Legend>
        <PaneButtons>
          <PaneBtn>
            <MinIcon />
          </PaneBtn>
          <PaneBtn>
            <RestoreIcon />
          </PaneBtn>
          <PaneBtn $w={15}>
            <CloseIcon />
          </PaneBtn>
        </PaneButtons>
      </ChartPane>

      <ScrollRow>
        <Arrow left fill="#555" />
        <ScrollThumb>
          <ThumbLine />
          <ThumbLine />
          <ThumbLine />
        </ScrollThumb>
        <Arrow fill="#555" />
      </ScrollRow>

      <TabsRow>
        <TabNav>
          <TabNavBtn>
            <Arrow left bar />
          </TabNavBtn>
          <TabNavBtn>
            <Arrow left />
          </TabNavBtn>
          <TabNavBtn>
            <Arrow />
          </TabNavBtn>
          <TabNavBtn>
            <Arrow bar />
          </TabNavBtn>
        </TabNav>
        <TabStrip>
          {tabItems.map(([label, w]) => (
            <Tab key={label} $w={w} $active={label === "STOXX-FTSEMIB sito"}>
              {label}
            </Tab>
          ))}
        </TabStrip>
      </TabsRow>

      <StatusBarBox>
        <StatusHelp>For Help, press F1</StatusHelp>
        <StatusCell $w={52} $plain>
          Acct:
        </StatusCell>
        {statusCells.map(([label, w, c]) => (
          <StatusCell key={label} $w={w} $c={c}>
            {label}
          </StatusCell>
        ))}
        <StatusCell $w={19}>
          <RedDot />
        </StatusCell>
        <StatusCell $w={124}>04/08/2023 15:54</StatusCell>
      </StatusBarBox>
      <BottomEdge />
    </Root>
  );
}
